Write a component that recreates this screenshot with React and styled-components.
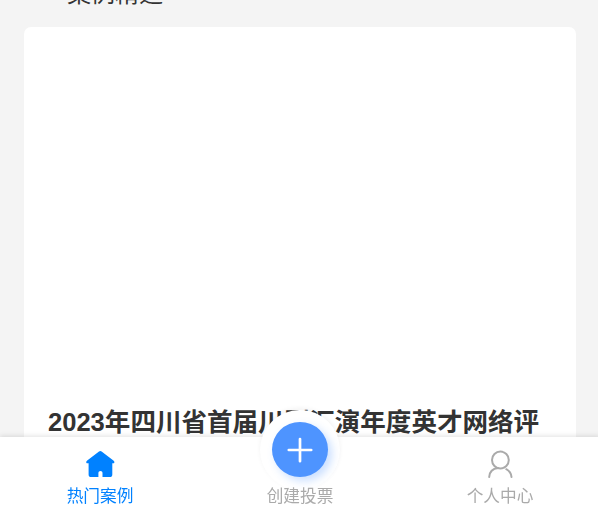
import React from "react";
import styled, { createGlobalStyle } from "styled-components";

function App() {
  return (
    <Page.Wrapper>
      <CSSReset />

      <Page.Heading>案例精选</Page.Heading>
      <Card.Wrapper>
        <Card.Cover />
        <Card.Title>2023年四川省首届川剧汇演年度英才网络评</Card.Title>
      </Card.Wrapper>

      <TabBar.Wrapper>
        <TabBar.Item $active>
          <TabBar.Icon>
            <HomeIcon />
          </TabBar.Icon>
          <TabBar.Label>热门案例</TabBar.Label>
        </TabBar.Item>
        <TabBar.Item>
          <TabBar.Bump>
            <TabBar.AddButton aria-label="创建投票">
              <PlusIcon />
            </TabBar.AddButton>
          </TabBar.Bump>
          <TabBar.Label>创建投票</TabBar.Label>
        </TabBar.Item>
        <TabBar.Item>
          <TabBar.Icon>
            <UserIcon />
          </TabBar.Icon>
          <TabBar.Label>个人中心</TabBar.Label>
        </TabBar.Item>
      </TabBar.Wrapper>
    </Page.Wrapper>
  );
}

const HomeIcon = () => (
  <svg width="30" height="28" viewBox="0 0 30 28" fill="currentColor">
    <path d="M14 1.5Q15.3.4 16.6 1.5L28.4 10.4Q29.6 11.4 29.4 12.4Q29.1 13.3 28 13.3H27.3V24.4Q27.3 27 24.7 27H17.5V22.8Q17.5 20.9 15.5 20.9Q13.4 20.9 13.4 22.8V27H6.2Q3.6 27 3.6 24.4V13.3H2.6Q1.5 13.3 1.2 12.4Q1 11.4 2.2 10.4Z" />
  </svg>
);

const UserIcon = () => (
  <svg width="30" height="28" viewBox="0 0 30 28" fill="none" stroke="currentColor" strokeWidth="2" strokeLinecap="round">
    <circle cx="15.4" cy="10" r="8.4" />
    <path d="M4.2 27C4.5 22.5 7.5 18.8 13 18.1M21.3 19.2C24.5 21 26.2 23.6 26.5 27" />
  </svg>
);

const PlusIcon = () => (
  <svg width="26" height="26" viewBox="0 0 26 26" fill="none" stroke="#fff" strokeWidth="2.7" strokeLinecap="round">
    <path d="M13 2V24.2M1.8 13H24.2" />
  </svg>
);

const Page = {
  Wrapper: styled.main`
    width: 600px;
    height: 100vh;
    padding: 0 24px;
    overflow: hidden;
    background-color: #f4f4f4;
  `,
  Heading: styled.h2`
    height: 27px;
    padding-left: 43px;
    line-height: 36px;
    margin-top: -24px;
    margin-bottom: 24px;
    font-size: 24px;
    font-weight: 400;
    color: #333;
  `,
};

const Card = {
  Wrapper: styled.article`
    height: 560px;
    padding: 0 24px;
    border-radius: 7px;
    background-color: #fff;
  `,
  Cover: styled.div`
    height: 376px;
  `,
  Title: styled.h3`
    font-size: 25.55px;
    line-height: 38px;
    font-weight: 700;
    white-space: nowrap;
    color: #333;
  `,
};

const TabBar = {
  Wrapper: styled.nav`
    position: fixed;
    left: 0;
    bottom: 0;
    width: 600px;
    height: 76px;
    display: flex;
    background-color: #fff;
    box-shadow: 0 -1px 5px rgba(0, 0, 0, 0.12);
  `,
  Item: styled.div`
    flex: 1;
    display: flex;
    flex-direction: column;
    align-items: center;
    color: ${(props) => (props.$active ? "#0081ff" : "#aaa")};
  `,
  Icon: styled.span`
    height: 47px;
    padding-top: 13px;
    display: flex;
  `,
  Bump: styled.div`
    width: 80px;
    height: 80px;
    margin-top: -27px;
    margin-bottom: -6px;
    padding-bottom: 1px;
    display: flex;
    justify-content: center;
    align-items: center;
    border-radius: 50%;
    background-color: #fff;
    box-shadow: 0 -2px 5px rgba(0, 0, 0, 0.05);
  `,
  AddButton: styled.button`
    width: 56px;
    height: 55px;
    display: flex;
    justify-content: center;
    align-items: center;
    border: none;
    border-radius: 50%;
    background-color: #4e94ff;
    box-shadow: 4px 4px 8px rgba(78, 148, 255, 0.3);
  `,
  Label: styled.span`
    font-size: 16.7px;
    line-height: 26px;
    z-index: 1;
  `,
};

const CSSReset = createGlobalStyle`
*,
*::before,
*::after {
  margin: 0;
  padding: 0;
  box-sizing: border-box;
}

body {
  overflow: hidden;
  font-family: "Liberation Sans", "Noto Sans CJK SC", sans-serif;
}
`;

export default App;
